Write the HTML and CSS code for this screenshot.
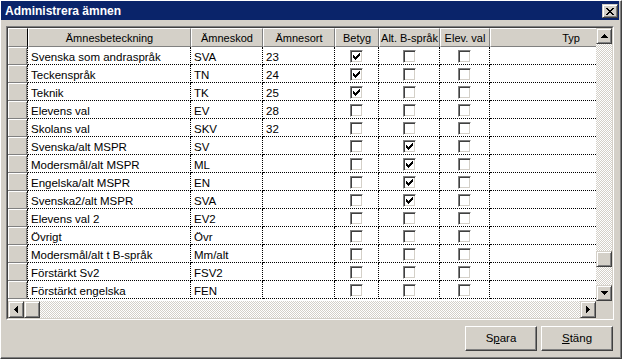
FILE: index.html
```html
<!DOCTYPE html>
<html>
<head>
  <title>Administrera ämnen</title>
  <link rel="stylesheet" href="styles.css">
</head>
<body>
  <div class="window">
    <div class="titlebar">
      <span class="title">Administrera ämnen</span>
      <span class="close raised">
        <svg width="8" height="7" viewBox="0 0 8 7"><path d="M0 0h2v1h-2z M6 0h2v1h-2z M1 1h2v1h-2z M5 1h2v1h-2z M2 2h4v1h-4z M3 3h2v1h-2z M2 4h4v1h-4z M1 5h2v1h-2z M5 5h2v1h-2z M0 6h2v1h-2z M6 6h2v1h-2z"/></svg>
      </span>
    </div>

    <div class="content">
      <div class="grid-outer">
        <div class="grid-inner">
          <div class="grid-top">
            <div class="view">
              <div class="rows">
                <div class="hcell corner"></div>
                <div class="hcell">Ämnesbeteckning</div>
                <div class="hcell">Ämneskod</div>
                <div class="hcell">Ämnesort</div>
                <div class="hcell">Betyg</div>
                <div class="hcell">Alt. B-språk</div>
                <div class="hcell">Elev. val</div>
                <div class="hcell">Typ</div>

                <div class="rhead"></div><div class="cell">Svenska som andraspråk</div><div class="cell">SVA</div><div class="cell">23</div>
                <div class="cell check"><span class="box on"></span></div><div class="cell check"><span class="box"></span></div><div class="cell check"><span class="box"></span></div><div class="cell"></div>

                <div class="rhead"></div><div class="cell">Teckenspråk</div><div class="cell">TN</div><div class="cell">24</div>
                <div class="cell check"><span class="box on"></span></div><div class="cell check"><span class="box"></span></div><div class="cell check"><span class="box"></span></div><div class="cell"></div>

                <div class="rhead"></div><div class="cell">Teknik</div><div class="cell">TK</div><div class="cell">25</div>
                <div class="cell check"><span class="box on"></span></div><div class="cell check"><span class="box"></span></div><div class="cell check"><span class="box"></span></div><div class="cell"></div>

                <div class="rhead"></div><div class="cell">Elevens val</div><div class="cell">EV</div><div class="cell">28</div>
                <div class="cell check"><span class="box"></span></div><div class="cell check"><span class="box"></span></div><div class="cell check"><span class="box"></span></div><div class="cell"></div>

                <div class="rhead"></div><div class="cell">Skolans val</div><div class="cell">SKV</div><div class="cell">32</div>
                <div class="cell check"><span class="box"></span></div><div class="cell check"><span class="box"></span></div><div class="cell check"><span class="box"></span></div><div class="cell"></div>

                <div class="rhead"></div><div class="cell">Svenska/alt MSPR</div><div class="cell">SV</div><div class="cell"></div>
                <div class="cell check"><span class="box"></span></div><div class="cell check"><span class="box on"></span></div><div class="cell check"><span class="box"></span></div><div class="cell"></div>

                <div class="rhead"></div><div class="cell">Modersmål/alt MSPR</div><div class="cell">ML</div><div class="cell"></div>
                <div class="cell check"><span class="box"></span></div><div class="cell check"><span class="box on"></span></div><div class="cell check"><span class="box"></span></div><div class="cell"></div>

                <div class="rhead"></div><div class="cell">Engelska/alt MSPR</div><div class="cell">EN</div><div class="cell"></div>
                <div class="cell check"><span class="box"></span></div><div class="cell check"><span class="box on"></span></div><div class="cell check"><span class="box"></span></div><div class="cell"></div>

                <div class="rhead"></div><div class="cell">Svenska2/alt MSPR</div><div class="cell">SVA</div><div class="cell"></div>
                <div class="cell check"><span class="box"></span></div><div class="cell check"><span class="box on"></span></div><div class="cell check"><span class="box"></span></div><div class="cell"></div>

                <div class="rhead"></div><div class="cell">Elevens val 2</div><div class="cell">EV2</div><div class="cell"></div>
                <div class="cell check"><span class="box"></span></div><div class="cell check"><span class="box"></span></div><div class="cell check"><span class="box"></span></div><div class="cell"></div>

                <div class="rhead"></div><div class="cell">Övrigt</div><div class="cell">Övr</div><div class="cell"></div>
                <div class="cell check"><span class="box"></span></div><div class="cell check"><span class="box"></span></div><div class="cell check"><span class="box"></span></div><div class="cell"></div>

                <div class="rhead"></div><div class="cell">Modersmål/alt t B-språk</div><div class="cell">Mm/alt</div><div class="cell"></div>
                <div class="cell check"><span class="box"></span></div><div class="cell check"><span class="box"></span></div><div class="cell check"><span class="box"></span></div><div class="cell"></div>

                <div class="rhead"></div><div class="cell">Förstärkt Sv2</div><div class="cell">FSV2</div><div class="cell"></div>
                <div class="cell check"><span class="box"></span></div><div class="cell check"><span class="box"></span></div><div class="cell check"><span class="box"></span></div><div class="cell"></div>

                <div class="rhead"></div><div class="cell">Förstärkt engelska</div><div class="cell">FEN</div><div class="cell"></div>
                <div class="cell check"><span class="box"></span></div><div class="cell check"><span class="box"></span></div><div class="cell check"><span class="box"></span></div><div class="cell"></div>
              </div>
            </div>

            <div class="vscroll">
              <span class="sbtn raised">
                <svg width="7" height="4" viewBox="0 0 7 4"><path d="M3 0h1v1h-1z M2 1h3v1h-3z M1 2h5v1h-5z M0 3h7v1h-7z"/></svg>
              </span>
              <div class="vtrack"><span class="vthumb raised"></span></div>
              <span class="sbtn raised">
                <svg width="7" height="4" viewBox="0 0 7 4"><path d="M0 0h7v1h-7z M1 1h5v1h-5z M2 2h3v1h-3z M3 3h1v1h-1z"/></svg>
              </span>
            </div>
          </div>

          <div class="hscroll">
            <span class="hbtn raised">
              <svg width="4" height="7" viewBox="0 0 4 7"><path d="M3 0h1v7h-1z M2 1h1v5h-1z M1 2h1v3h-1z M0 3h1v1h-1z"/></svg>
            </span>
            <span class="hbtn raised"></span>
            <div class="htrack"></div>
            <span class="hbtn raised">
              <svg width="4" height="7" viewBox="0 0 4 7"><path d="M0 0h1v7h-1z M1 1h1v5h-1z M2 2h1v3h-1z M3 3h1v1h-1z"/></svg>
            </span>
            <div class="scorner"></div>
          </div>
        </div>
      </div>

      <div class="buttons">
        <button class="btn">S<u>p</u>ara</button>
        <button class="btn"><u>S</u>täng</button>
      </div>
    </div>
  </div>
</body>
</html>
```

FILE: styles.css
```css
body {
  margin: 0;
  padding: 0;
  background: #d4d0c8;
  font-family: "Liberation Sans", Arial, sans-serif;
  font-size: 11.5px;
  color: #000000;
}

.window {
  width: 622px;
  height: 359px;
  box-sizing: border-box;
  background: #d4d0c8;
  border: 1px solid;
  border-color: #ffffff #404040 #404040 #ffffff;
  box-shadow: inset -1px -1px #808080;
  padding: 0 2px 2px 0;
  display: flex;
  flex-direction: column;
}

.titlebar {
  height: 19px;
  background: #0a246a;
  display: flex;
  justify-content: space-between;
  align-items: flex-start;
}

.title {
  color: #ffffff;
  font-weight: bold;
  font-size: 12px;
  line-height: 14px;
  padding: 3px 0 0 4px;
}

.raised {
  background: #d4d0c8;
  box-sizing: border-box;
  border: 1px solid;
  border-color: #d4d0c8 #404040 #404040 #d4d0c8;
  box-shadow: inset 1px 1px #ffffff, inset -1px -1px #808080;
  display: flex;
  align-items: center;
  justify-content: center;
}

.close {
  width: 16px;
  height: 14px;
  margin: 3px 1px 0 0;
}

.content {
  padding: 6px 0 0 5px;
}

.grid-outer {
  width: 608px;
  height: 294px;
  box-sizing: border-box;
  border: 1px solid;
  border-color: #808080 #ffffff #ffffff #808080;
}

.grid-inner {
  height: 100%;
  box-sizing: border-box;
  border: 1px solid;
  border-color: #404040 #d4d0c8 #d4d0c8 #404040;
  background: #ffffff;
  display: flex;
  flex-direction: column;
}

.grid-top {
  height: 273px;
  display: flex;
}

.view {
  width: 588px;
  overflow: hidden;
}

.rows {
  display: grid;
  grid-template-columns: 20px 163px 72px 72px 44px 61px 50px 162px;
  grid-template-rows: 19px;
  grid-auto-rows: 18px;
  width: max-content;
}

.hcell {
  background: #d4d0c8;
  box-sizing: border-box;
  border-top: 1px solid #ffffff;
  border-left: 1px solid #ffffff;
  border-right: 1px solid #808080;
  border-bottom: 1px solid #808080;
  text-align: center;
  font-size: 11px;
  line-height: 14px;
  padding-top: 2px;
  white-space: nowrap;
  overflow: hidden;
}

.corner {
  border-right: 1px solid #000000;
}

.rhead {
  background: #d4d0c8;
  box-sizing: border-box;
  border-right: 1px dotted #000000;
  border-bottom: 1px solid #808080;
  box-shadow: inset 1px 1px #ffffff, inset -1px 0 #808080;
}

.cell {
  box-sizing: border-box;
  border-right: 1px dotted #000000;
  border-bottom: 1px dotted #000000;
  padding: 3px 0 0 3px;
  line-height: 14px;
  white-space: nowrap;
  overflow: hidden;
}

.check {
  display: flex;
  justify-content: center;
  align-items: flex-start;
  padding: 3px 0 0 0;
}

.box {
  width: 13px;
  height: 13px;
  box-sizing: border-box;
  background: #ffffff;
  border: 1px solid;
  border-color: #808080 #ffffff #ffffff #808080;
  box-shadow: inset 1px 1px #404040, inset -1px -1px #d4d0c8;
}

.box.on {
  background: #ffffff url("data:image/svg+xml;utf8,<svg xmlns='http://www.w3.org/2000/svg' width='11' height='11'><path d='M2 4h1v3h-1z M3 5h1v3h-1z M4 6h1v3h-1z M5 5h1v3h-1z M6 4h1v3h-1z M7 3h1v3h-1z M8 2h1v3h-1z'/></svg>") no-repeat 0 0;
}

.vscroll {
  width: 16px;
  display: flex;
  flex-direction: column;
}

.sbtn {
  height: 16px;
  flex-shrink: 0;
}

.vtrack {
  flex: 1;
  background: repeating-conic-gradient(#d4d0c8 0 25%, #ffffff 0 50%) 0 0 / 2px 2px;
  display: flex;
  flex-direction: column;
}

.vthumb {
  height: 16px;
  margin-top: 207px;
}

.hscroll {
  height: 17px;
  display: flex;
}

.hbtn {
  width: 16px;
  flex-shrink: 0;
}

.htrack {
  flex: 1;
  background: repeating-conic-gradient(#d4d0c8 0 25%, #ffffff 0 50%) 0 0 / 2px 2px;
}

.scorner {
  width: 16px;
  background: #d4d0c8;
}

.buttons {
  display: flex;
  justify-content: flex-end;
  gap: 4px;
  margin: 6px 6px 0 0;
}

.btn {
  width: 72px;
  height: 25px;
  box-sizing: border-box;
  background: #d4d0c8;
  border: 1px solid;
  border-color: #ffffff #404040 #404040 #ffffff;
  box-shadow: inset -1px -1px #808080;
  font-family: "Liberation Sans", Arial, sans-serif;
  font-size: 11.5px;
  color: #000000;
  line-height: 21px;
  padding: 0;
}
```
